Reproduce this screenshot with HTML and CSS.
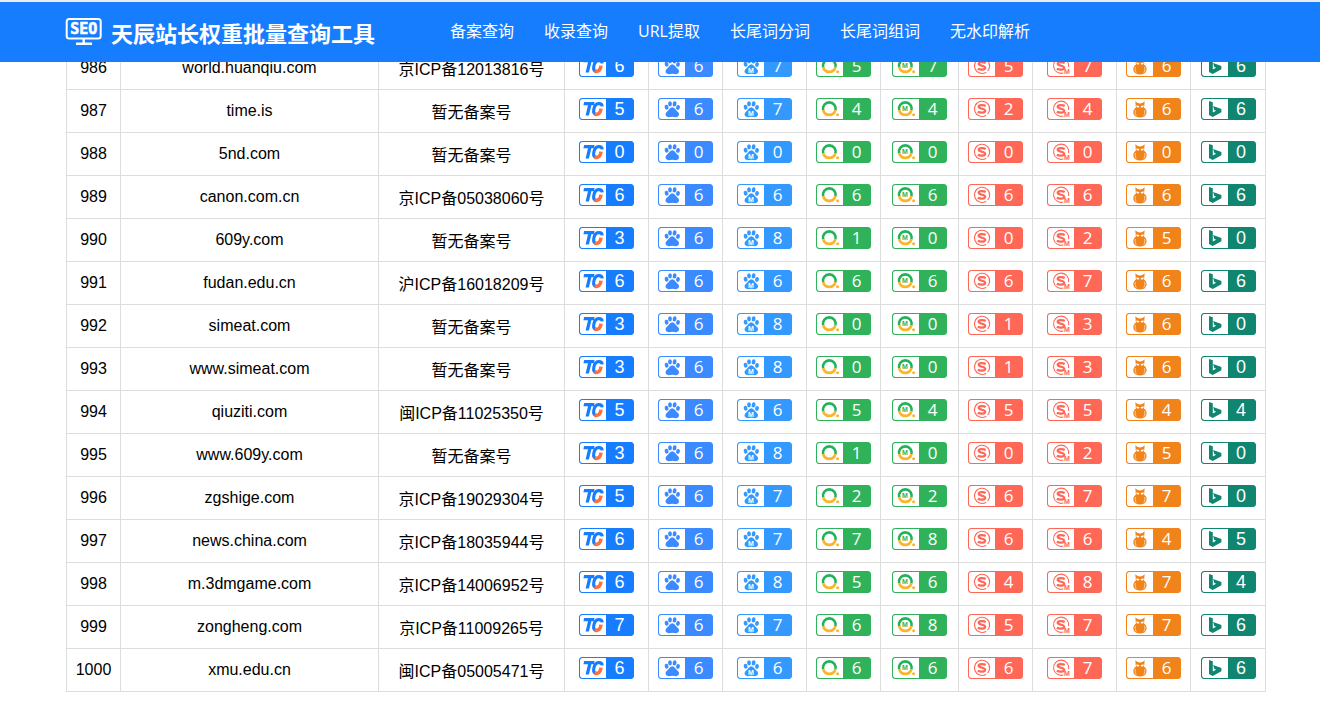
FILE: index.html
```html
<!DOCTYPE html>
<html lang="zh-CN">
<head>
<meta charset="utf-8">
<title>天辰站长权重批量查询工具</title>
<link rel="stylesheet" href="styles.css">
</head>
<body>
<svg class="sprite" aria-hidden="true">
  <symbol id="tc" viewBox="0 0 26 20">
    <path fill="#167dff" d="M4.2 3H14.6L13.8 6.2H11.4L8.9 16.5H5.6L8 6.2H3.4Z"/>
    <path fill="none" stroke="#167dff" stroke-width="3.1" d="M22.2 7.3C22 4.9 20.4 4.5 18.4 4.6C15.3 4.8 14.3 7.5 13.8 10.3C13.3 13.4 13.8 15.3 16.2 15.3"/>
    <path fill="none" stroke="#ff6f3c" stroke-width="3.6" d="M14.5 15.2C18.6 15.9 20.5 14.2 21 9.6"/>
  </symbol>
  <symbol id="paw" viewBox="0 0 26 20">
    <g fill="currentColor">
      <ellipse cx="7.6" cy="8.2" rx="1.9" ry="2.5" transform="rotate(-15 7.6 8.2)"/>
      <ellipse cx="11" cy="4.8" rx="1.9" ry="2.6"/>
      <ellipse cx="15.6" cy="4.8" rx="1.9" ry="2.6" transform="rotate(12 15.6 4.8)"/>
      <ellipse cx="19" cy="8.4" rx="1.9" ry="2.5" transform="rotate(12 19 8.4)"/>
      <path d="M13.3 8.3C15.3 8.3 16.2 10.6 17.9 11.9C20 13.5 20.7 15.4 19.4 17.1C17.8 18.9 15.6 17.8 13.3 17.8S8.8 18.9 7.2 17.1C5.9 15.4 6.6 13.5 8.7 11.9C10.4 10.6 11.3 8.3 13.3 8.3Z"/>
    </g>
  </symbol>
  <symbol id="so" viewBox="0 0 26 20">
    <path fill="none" stroke="#21b35b" stroke-width="2.7" d="M6.2 11.2A6.3 6.3 0 1 1 18.4 11.2"/>
    <path fill="none" stroke="#fbb52c" stroke-width="2.7" d="M6.2 11.2A6.3 6.3 0 0 0 18.4 11.2"/>
    <circle cx="20.6" cy="15.8" r="1.5" fill="#fbb52c"/>
  </symbol>
  <symbol id="sogou" viewBox="0 0 26 20">
    <path fill="none" stroke="#ff6757" stroke-width="1.1" d="M17.2 16.2A7.6 7.6 0 1 1 20.6 10.6C20.4 12.6 19.7 14 18.6 15"/>
    <path fill="none" stroke="#ff6757" stroke-width="2.3" d="M16.7 7C14.9 5.9 9.7 5.5 9.7 7.8C9.7 10 16.2 9.5 16.2 11.8C16.2 14.2 11 13.9 8.8 12.7"/>
  </symbol>
  <symbol id="sogoum" viewBox="0 0 26 20">
    <path fill="none" stroke="#ff6757" stroke-width="1.1" d="M15.4 17A7.6 7.6 0 1 1 20.6 11.2"/>
    <path fill="none" stroke="#ff6757" stroke-width="2.3" d="M16.7 7C14.9 5.9 9.7 5.5 9.7 7.8C9.7 10 16.2 9.5 16.2 11.8C16.2 14.2 11 13.9 8.8 12.7"/>
  </symbol>
  <symbol id="owl" viewBox="0 0 26 20">
    <path fill="#f08319" d="M8.3 2.2Q10.6 4.6 13 4.5Q15.4 4.6 17.7 2.2L17 8.8C20.6 10.6 20.4 16 16.8 17.8C14.5 18.9 11 18.8 8.9 17.6C5.4 15.8 5.5 10.6 8.9 8.8Z"/>
    <path fill="none" stroke="#fff" stroke-width=".6" d="M8.4 11Q7.4 14 9.2 16.6M17.6 11Q18.6 14 16.8 16.6"/>
    <path fill="#fff" d="M9.5 6.2L12.4 7.2L11.4 8.8L9.4 8ZM16.5 6.2L13.6 7.2L14.6 8.8L16.6 8Z"/>
  </symbol>
  <symbol id="bing" viewBox="0 0 26 20">
    <path fill="#108570" d="M7 2L10.8 3.2V13.4L14.2 11.8L12.3 10.9L11.1 7.1L19.4 10V13.2L10.7 18L7 16Z"/>
  </symbol>
</svg>

<header class="header">
  <a class="brand" href="#">
    <svg class="brand-icon" viewBox="0 0 38 30" aria-hidden="true">
      <rect x="1.7" y="2" width="34" height="19.5" rx="2.5" fill="none" stroke="#fff" stroke-width="2"/>
      <path fill="none" stroke="#fff" stroke-width="2.4" d="M18.7 21V26M11 26.8H27"/>
      <text x="18.7" y="17" class="brand-seo">SEO</text>
    </svg>
    <span>天辰站长权重批量查询工具</span>
  </a>
  <nav class="nav">
    <a href="#">备案查询</a>
    <a href="#">收录查询</a>
    <a href="#">URL提取</a>
    <a href="#">长尾词分词</a>
    <a href="#">长尾词组词</a>
    <a href="#">无水印解析</a>
  </nav>
</header>

<main class="main">
  <table class="ranks">
    <colgroup>
      <col class="c-id"><col class="c-domain"><col class="c-icp">
      <col class="c-wide"><col class="c-std"><col class="c-wide"><col class="c-std"><col class="c-mid">
      <col class="c-std"><col class="c-wide"><col class="c-std"><col>
    </colgroup>
    <tbody id="rows"></tbody>
  </table>
</main>
<script src="app.js"></script>
</body>
</html>
```
FILE: styles.css
```css
* { box-sizing: border-box; }

body {
  margin: 0;
  background: #fff;
  color: #000;
  font: 16px/24px "Liberation Sans", "Noto Sans CJK SC", sans-serif;
}

a { color: inherit; text-decoration: none; }

.sprite { position: absolute; width: 0; height: 0; }

.header {
  position: sticky;
  top: 0;
  z-index: 2;
  display: flex;
  align-items: center;
  gap: 75px;
  height: 62px;
  padding: 0 54px 0 65px;
  border-top: 2px solid #ececec;
  background: #167dff;
  color: #fff;
  white-space: nowrap;
}

.brand {
  display: flex;
  align-items: center;
  gap: 8px;
  font: bold 22px/32px "Noto Sans CJK SC", sans-serif;
}

.brand-icon { width: 38px; height: 30px; }

.brand-seo {
  fill: #fff;
  font: bold 15px "DejaVu Sans Mono", monospace;
  stroke: #fff;
  stroke-width: .6px;
  text-anchor: middle;
}

.nav {
  display: flex;
  gap: 30px;
  padding-bottom: 2px;
  font-family: "Open Sans", "Noto Sans CJK SC", sans-serif;
}

.main {
  margin: -16px 54px 0 66px;
  padding-bottom: 17px;
}

.ranks {
  width: 100%;
  table-layout: fixed;
  border-collapse: collapse;
}

.c-id { width: 54px; }
.c-domain { width: 258px; }
.c-icp { width: 186px; }
.c-wide { width: 84px; }
.c-mid { width: 78px; }
.c-std { width: 74px; }

.ranks td {
  height: 43px;
  padding: 0;
  border: 1px solid #ddd;
  text-align: center;
  vertical-align: middle;
}

.ranks .icp { padding-top: 3px; }

.badge {
  display: flex;
  width: 55px;
  height: 22px;
  margin: 0 auto 4px;
  overflow: hidden;
  border: 1px solid currentColor;
  border-radius: 3px;
  background: currentColor;
}

.badge svg {
  flex: none;
  width: 26px;
  height: 20px;
  border-radius: 2px 0 0 2px;
  background: #fff;
}

.badge span {
  flex: 1;
  color: #fff;
  font: 17px/20px "Open Sans", sans-serif;
}

.tc span, .bing span { font-family: "Liberation Sans", sans-serif; font-size: 18px; }

.tc { color: #167dff; }
.paw { color: #3b8aff; }
.pawm { color: #3399ff; }
.so, .som { color: #30b25b; }
.sogou, .sogoum { color: #ff6757; }
.owl { color: #f08319; }
.bing { color: #108570; }

.badge text {
  fill: currentColor;
  font: bold 7px "Liberation Sans", sans-serif;
  text-anchor: middle;
}
.pawm text { fill: #fff; }
```
FILE: app.js
```js
// Each engine: badge class, icon symbol, and the position of the "M" that marks a mobile rank.
const engines = [
  { name: "tc", icon: "tc" },
  { name: "paw", icon: "paw" },
  { name: "pawm", icon: "paw", m: [13, 17] },
  { name: "so", icon: "so" },
  { name: "som", icon: "so", m: [12, 12] },
  { name: "sogou", icon: "sogou" },
  { name: "sogoum", icon: "sogoum", m: [19, 18] },
  { name: "owl", icon: "owl" },
  { name: "bing", icon: "bing" }
];
const none = "暂无备案号";
// Each row: id, domain, ICP record, then one digit per engine.
const sites = [
  [986, "world.huanqiu.com", "京ICP备12013816号", "667575766"],
  [987, "time.is", none, "567442466"],
  [988, "5nd.com", none, "000000000"],
  [989, "canon.com.cn", "京ICP备05038060号", "666666666"],
  [990, "609y.com", none, "368100250"],
  [991, "fudan.edu.cn", "沪ICP备16018209号", "666666766"],
  [992, "simeat.com", none, "368001360"],
  [993, "www.simeat.com", none, "368001360"],
  [994, "qiuziti.com", "闽ICP备11025350号", "566545544"],
  [995, "www.609y.com", none, "368100250"],
  [996, "zgshige.com", "京ICP备19029304号", "567226770"],
  [997, "news.china.com", "京ICP备18035944号", "667786645"],
  [998, "m.3dmgame.com", "京ICP备14006952号", "668564874"],
  [999, "zongheng.com", "京ICP备11009265号", "767685776"],
  [1000, "xmu.edu.cn", "闽ICP备05005471号", "666666766"]
];

function badge({ name, icon, m }, rank) {
  const mark = m ? `<text x="${m[0]}" y="${m[1]}">M</text>` : "";
  return `<td><div class="badge ${name}"><svg viewBox="0 0 26 20" aria-hidden="true"><use href="#${icon}" width="26" height="20"/>${mark}</svg><span>${rank}</span></div></td>`;
}

document.getElementById("rows").innerHTML = sites.map(([id, domain, icp, ranks]) =>
  `<tr><td>${id}</td><td>${domain}</td><td class="icp">${icp}</td>${engines.map((e, i) => badge(e, ranks[i])).join("")}</tr>`
).join("");
```
